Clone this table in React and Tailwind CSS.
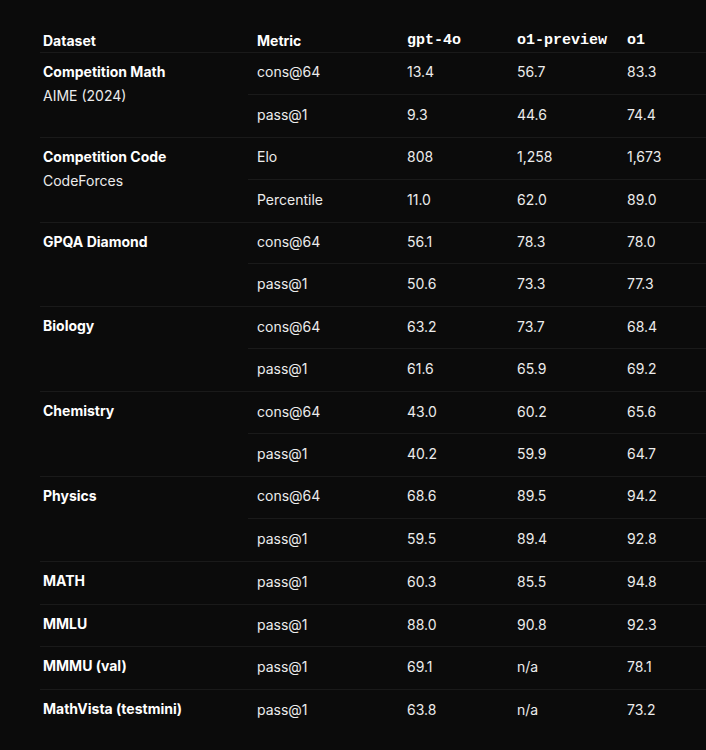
const groups = [
    { name: "Competition Math", sub: "AIME (2024)", rows: [["cons@64", "13.4", "56.7", "83.3"], ["pass@1", "9.3", "44.6", "74.4"]] },
    { name: "Competition Code", sub: "CodeForces", rows: [["Elo", "808", "1,258", "1,673"], ["Percentile", "11.0", "62.0", "89.0"]] },
    { name: "GPQA Diamond", rows: [["cons@64", "56.1", "78.3", "78.0"], ["pass@1", "50.6", "73.3", "77.3"]] },
    { name: "Biology", rows: [["cons@64", "63.2", "73.7", "68.4"], ["pass@1", "61.6", "65.9", "69.2"]] },
    { name: "Chemistry", rows: [["cons@64", "43.0", "60.2", "65.6"], ["pass@1", "40.2", "59.9", "64.7"]] },
    { name: "Physics", rows: [["cons@64", "68.6", "89.5", "94.2"], ["pass@1", "59.5", "89.4", "92.8"]] },
    { name: "MATH", rows: [["pass@1", "60.3", "85.5", "94.8"]] },
    { name: "MMLU", rows: [["pass@1", "88.0", "90.8", "92.3"]] },
    { name: "MMMU (val)", rows: [["pass@1", "69.1", "n/a", "78.1"]] },
    { name: "MathVista (testmini)", rows: [["pass@1", "63.8", "n/a", "73.2"]] },
];

const App = () => {
    return (
        <div className="min-h-[750px] w-[706px] bg-[#0b0b0b] pl-[40px] pt-[31px] text-[14px] text-[#ececec] font-['Inter','Liberation_Sans',sans-serif]">
            {/* head */}
            <div className="flex border-b border-[#1a1a1a] pb-[1px] leading-5 text-white">
                <div className="w-[208px] pl-[3px] font-bold">Dataset</div>
                <div className="w-[150px] pl-[9px] font-bold">Metric</div>
                <div className="flex font-['Liberation_Mono',monospace] text-[15px] font-bold">
                    <div className="w-[110px] pl-[9px]">gpt-4o</div>
                    <div className="w-[110px] pl-[9px]">o1-preview</div>
                    <div className="pl-[9px]">o1</div>
                </div>
            </div>

            {groups.map((g, gi) => (
                <div key={g.name} className={"flex " + (gi < groups.length - 1 ? "border-b border-[#1a1a1a]" : "")}>
                    <div className="w-[208px] pl-[3px] pt-[7px] leading-6">
                        <div className="font-bold text-white">{g.name}</div>
                        {g.sub && <div>{g.sub}</div>}
                    </div>
                    <div className="flex-1">
                        {g.rows.map((r, i) => (
                            <div key={i} className={"flex h-[41.9px] items-center pb-[3px] " + (i < g.rows.length - 1 ? "border-b border-[#1a1a1a]" : "")}>
                                <div className="w-[150px] pl-[9px]">{r[0]}</div>
                                <div className="w-[110px] pl-[9px]">{r[1]}</div>
                                <div className="w-[110px] pl-[9px]">{r[2]}</div>
                                <div className="pl-[9px]">{r[3]}</div>
                            </div>
                        ))}
                    </div>
                </div>
            ))}
        </div>
    );
};

export default App;
